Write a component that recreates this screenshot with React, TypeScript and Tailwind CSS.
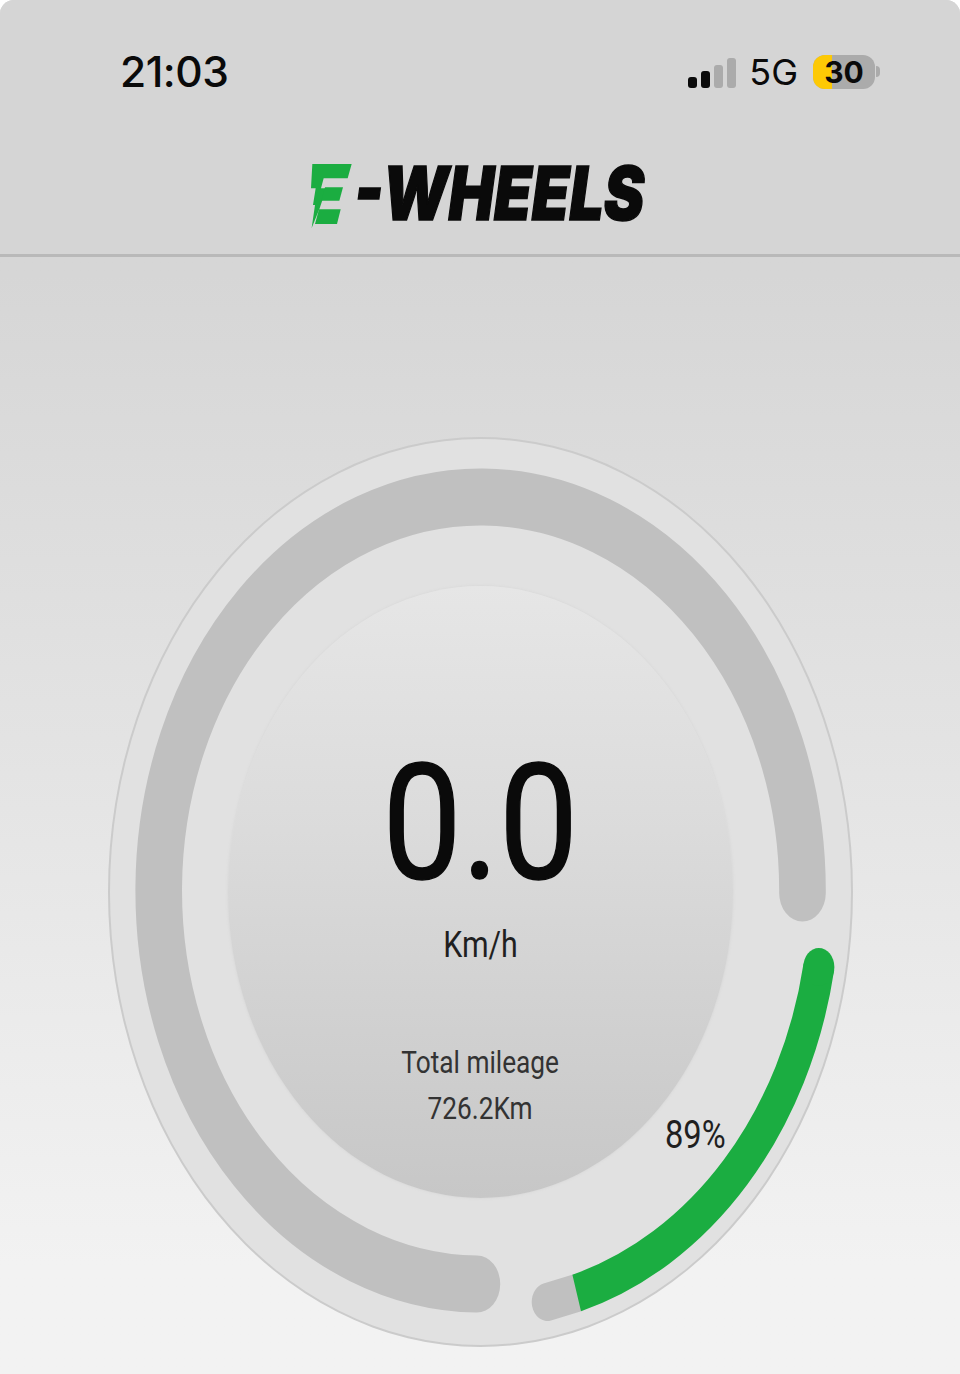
export default function App() {
  return (
    <div className="w-[960px] h-[1374px] overflow-hidden rounded-t-[14px] bg-gradient-to-b from-[#d6d6d6] from-20% to-[#f2f2f2] to-92% font-['Roboto',sans-serif] text-[#0a0a0a]">
      {/* Header */}
      <div className="h-[257px] border-b-[3px] border-[#b9b9b9] bg-[#d5d5d5]">
        <div className="flex h-[143px] items-center justify-between pl-[120px] pr-[80px]">
          <span className="mt-[2px] font-['Inter',sans-serif] text-[42.5px] font-medium leading-none tracking-[-0.5px]">21:03</span>
          <div className="flex items-center">
            <div className="mt-[3px] flex h-[30px] items-end gap-[4px]">
              <div className="h-[11px] w-[9px] rounded-[3px] bg-[#0a0a0a]" />
              <div className="h-[17px] w-[9px] rounded-[3px] bg-[#0a0a0a]" />
              <div className="h-[23px] w-[9px] rounded-[3px] bg-[#ababab]" />
              <div className="h-[30px] w-[9px] rounded-[3px] bg-[#ababab]" />
            </div>
            <span className="ml-[13px] font-['Inter',sans-serif] text-[36px] font-normal leading-none">5G</span>
            <div className="relative ml-[15px] flex h-[34px] w-[62px] overflow-hidden rounded-[12px] bg-[#ababab]">
              <div className="h-full w-[19px] bg-[#fdc905]" />
              <span className="absolute inset-0 flex items-center justify-center font-['Inter',sans-serif] text-[30px] font-bold leading-none">30</span>
            </div>
            <div className="ml-[1px] h-[11px] w-[4px] rounded-r-full bg-[#ababab]" />
          </div>
        </div>
        <div className="flex h-[108px] items-start justify-center pr-[12px] pt-[17px]">
          <svg viewBox="60 60 135 210" width="45" height="70">
            <path d="M70 72H188L176 115H104L96 145H112L92 205L68 264L78 195H72L80 145H66Z" fill="#1bad41" />
            <path d="M108 142H162L151 182H97Z" fill="#1bad41" />
            <path d="M90 208H155L144 252H78Z" fill="#1bad41" />
          </svg>
          <span className="inline-block w-[286px] origin-left scale-x-[0.82] whitespace-nowrap font-['Inter',sans-serif] text-[74px] font-black italic leading-[66px] tracking-[0px] [-webkit-text-stroke:1.5px_#0a0a0a]">
            -WHEELS
          </span>
        </div>
      </div>

      {/* Dial */}
      <div className="relative mx-auto mt-[180px] flex h-[910px] w-[745px] items-center justify-center rounded-[50%] border-2 border-[#cbcbcb] bg-[#e1e1e1]">
        <svg viewBox="0 0 745 910" width="745" height="910" className="absolute left-[-2px] top-[-2px]">
          <g transform="translate(373 454) scale(0.818 1)">
            <path d="M393 2A393.5 393.5 0 1 0 -5 393" fill="none" stroke="#c0c0c0" strokeWidth="57" strokeLinecap="round" />
            <path d="M81 411L117 402" fill="none" stroke="#c0c0c0" strokeWidth="38" strokeLinecap="round" />
            <path d="M413 76A419 419 0 0 1 117 402" fill="none" stroke="#1bad41" strokeWidth="38" />
            <circle cx="413" cy="76" r="19" fill="#1bad41" />
          </g>
        </svg>

        <div className="relative flex h-[612px] w-[505px] flex-col items-center rounded-[50%] bg-gradient-to-b from-[#e6e6e6] via-[#dbdbdb] via-40% to-[#c7c7c7] pt-[152px] shadow-[0_0_3px_#d4d4d4]">
          <span className="scale-x-[0.87] text-[162px] font-normal leading-[170px] [-webkit-text-stroke:1.5px_#0a0a0a]">0.0</span>
          <span className="mt-[15px] scale-x-[0.82] text-[37px] leading-[44px] text-[#1f1f1f]">Km/h</span>
          <span className="mt-[72px] scale-x-[0.82] text-[32px] leading-[46px] text-[#333333]">Total mileage</span>
          <span className="scale-x-[0.82] text-[32px] leading-[46px] text-[#333333]">726.2Km</span>
        </div>

        <span className="absolute left-[550px] top-[674px] scale-x-[0.86] text-[38px] leading-[44px] text-[#1f1f1f]">89%</span>
      </div>
    </div>
  );
}
